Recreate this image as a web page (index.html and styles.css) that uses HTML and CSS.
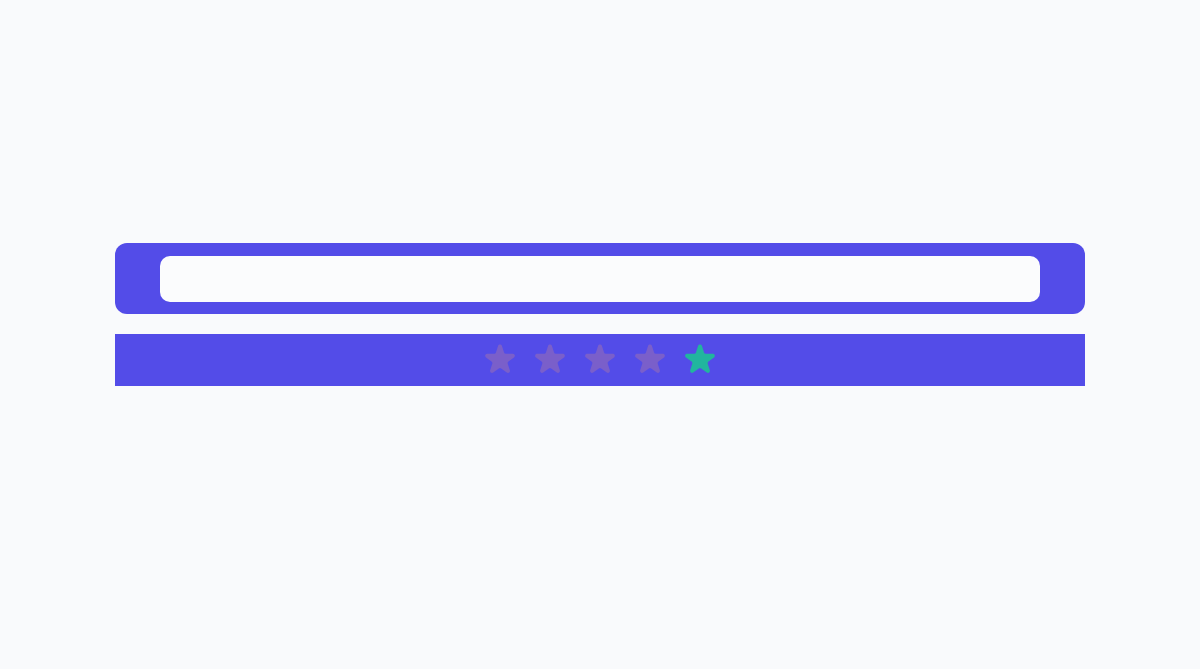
FILE: index.html
```html
<!DOCTYPE html>
<html lang="en">
<head>
<meta charset="utf-8">
<title>Rating</title>
<link rel="stylesheet" href="styles.css">
</head>
<body>
<main class="page">
  <section class="widget">
    <div class="input-frame">
      <div class="input-box"></div>
    </div>
    <div class="rating-bar">
      <svg class="star star-muted" viewBox="0 0 20 20" aria-hidden="true"><path d="M9.049 2.927c.3-.921 1.603-.921 1.902 0l1.07 3.292a1 1 0 00.95.69h3.462c.969 0 1.371 1.24.588 1.81l-2.8 2.034a1 1 0 00-.364 1.118l1.07 3.292c.3.921-.755 1.688-1.54 1.118l-2.8-2.034a1 1 0 00-1.175 0l-2.8 2.034c-.784.57-1.838-.197-1.539-1.118l1.07-3.292a1 1 0 00-.364-1.118L2.98 8.72c-.783-.57-.38-1.81.588-1.81h3.461a1 1 0 00.951-.69l1.07-3.292z"/></svg>
      <svg class="star star-muted" viewBox="0 0 20 20" aria-hidden="true"><path d="M9.049 2.927c.3-.921 1.603-.921 1.902 0l1.07 3.292a1 1 0 00.95.69h3.462c.969 0 1.371 1.24.588 1.81l-2.8 2.034a1 1 0 00-.364 1.118l1.07 3.292c.3.921-.755 1.688-1.54 1.118l-2.8-2.034a1 1 0 00-1.175 0l-2.8 2.034c-.784.57-1.838-.197-1.539-1.118l1.07-3.292a1 1 0 00-.364-1.118L2.98 8.72c-.783-.57-.38-1.810.588-1.81h3.461a1 1 0 00.951-.69l1.07-3.292z"/></svg>
      <svg class="star star-muted" viewBox="0 0 20 20" aria-hidden="true"><path d="M9.049 2.927c.3-.921 1.603-.921 1.902 0l1.07 3.292a1 1 0 00.95.69h3.462c.969 0 1.371 1.24.588 1.81l-2.8 2.034a1 1 0 00-.364 1.118l1.07 3.292c.3.921-.755 1.688-1.54 1.118l-2.8-2.034a1 1 0 00-1.175 0l-2.8 2.034c-.784.57-1.838-.197-1.539-1.118l1.07-3.292a1 1 0 00-.364-1.118L2.98 8.72c-.783-.57-.38-1.81.588-1.81h3.461a1 1 0 00.951-.69l1.07-3.292z"/></svg>
      <svg class="star star-muted" viewBox="0 0 20 20" aria-hidden="true"><path d="M9.049 2.927c.3-.921 1.603-.921 1.902 0l1.07 3.292a1 1 0 00.95.69h3.462c.969 0 1.371 1.24.588 1.81l-2.8 2.034a1 1 0 00-.364 1.118l1.07 3.292c.3.921-.755 1.688-1.54 1.118l-2.8-2.034a1 1 0 00-1.175 0l-2.8 2.034c-.784.57-1.838-.197-1.539-1.118l1.07-3.292a1 1 0 00-.364-1.118L2.98 8.72c-.783-.57-.38-1.81.588-1.81h3.461a1 1 0 00.951-.69l1.07-3.292z"/></svg>
      <svg class="star star-active" viewBox="0 0 20 20" aria-hidden="true"><path d="M9.049 2.927c.3-.921 1.603-.921 1.902 0l1.07 3.292a1 1 0 00.95.69h3.462c.969 0 1.371 1.24.588 1.81l-2.8 2.034a1 1 0 00-.364 1.118l1.07 3.292c.3.921-.755 1.688-1.54 1.118l-2.8-2.034a1 1 0 00-1.175 0l-2.8 2.034c-.784.57-1.838-.197-1.539-1.118l1.07-3.292a1 1 0 00-.364-1.118L2.98 8.72c-.783-.57-.38-1.81.588-1.81h3.461a1 1 0 00.951-.69l1.07-3.292z"/></svg>
    </div>
  </section>
</main>
</body>
</html>
```

FILE: styles.css
```css
* { box-sizing: border-box; }

html, body {
  margin: 0;
  padding: 0;
  background: #f9fafc;
  font-family: "Inter", "Liberation Sans", sans-serif;
}

.page {
  min-height: 669px;
  padding: 243px 115px 0;
}

.widget {
  width: 970px;
  display: flex;
  flex-direction: column;
  gap: 20px;
}

.input-frame {
  background: #534ce8;
  border-radius: 12px;
  padding: 13px 45px 12px;
  height: 71px;
}

.input-box {
  background: #fbfcfd;
  border-radius: 10px;
  height: 46px;
}

.rating-bar {
  background: #534ce8;
  height: 52px;
  display: flex;
  align-items: center;
  justify-content: center;
  gap: 10px;
}

.star {
  width: 40px;
  height: 40px;
  display: block;
}

.star-muted { fill: #7a5fca; }
.star-active { fill: #21b59e; }
```
